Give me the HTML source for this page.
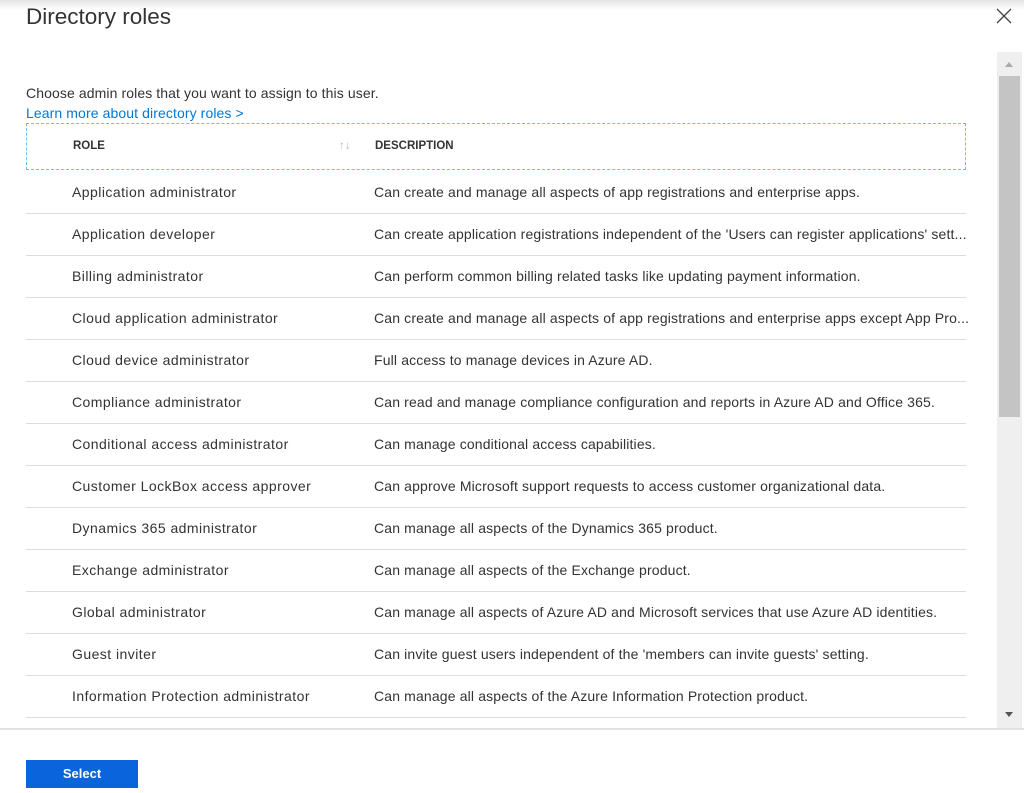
<!DOCTYPE html>
<html><head><style>
body{margin:0;width:1024px;height:793px;background:#fff;font-family:"Liberation Sans",sans-serif;color:#333;position:relative;overflow:hidden}
.top{position:absolute;left:0;top:0;width:1024px;height:10px;background:linear-gradient(#e4e4e4,#fff)}
h1{position:absolute;left:26px;top:4px;margin:0;font-size:22.5px;font-weight:normal;color:#333}
.x{position:absolute;left:995px;top:7px}
.intro{position:absolute;left:26px;top:85px;font-size:14px;letter-spacing:0.1px;color:#333}
.link{position:absolute;left:26px;top:105px;font-size:14px;letter-spacing:0.1px;color:#0078d7}
.hdr{position:absolute;left:26px;top:123px;width:940px;height:47px;border:1px dashed #6cc0f0;box-sizing:border-box}
.hdr span{position:absolute;top:16px;font-size:11.5px;font-weight:bold;color:#333}
.row{position:absolute;left:26px;width:940px;height:42px;border-bottom:1px solid #ddd;font-size:14px}
.row .r{position:absolute;left:46px;top:13px;color:#333;letter-spacing:0.45px}
.row .d{position:absolute;left:348px;top:13px;color:#333;white-space:nowrap;letter-spacing:0.15px}
.track{position:absolute;left:997px;top:52px;width:25px;height:676px;background:#efefef}
.thumb{position:absolute;left:999px;top:76px;width:21px;height:341px;background:#c4c4c4}
.bl{position:absolute;left:0;top:728px;width:1024px;height:2px;background:#e2e2e2}
.btn{position:absolute;left:26px;top:760px;width:112px;height:28px;background:#0a64dc;color:#fff;font-size:13px;font-weight:bold;text-align:center;line-height:28px}
</style></head><body>
<div class="top"></div>
<h1>Directory roles</h1>
<svg class="x" width="18" height="18" viewBox="0 0 18 18"><path d="M2 2L16 16M16 2L2 16" stroke="#444" stroke-width="1.3"/></svg>
<div class="intro">Choose admin roles that you want to assign to this user.</div>
<div class="link">Learn more about directory roles &gt;</div>
<div class="hdr"><span style="left:46px">ROLE</span><span style="left:312px;color:#bbb;font-weight:normal">↑↓</span><span style="left:348px">DESCRIPTION</span></div>
<div class="row" style="top:171px"><span class="r">Application administrator</span><span class="d">Can create and manage all aspects of app registrations and enterprise apps.</span></div>
<div class="row" style="top:213px"><span class="r">Application developer</span><span class="d">Can create application registrations independent of the 'Users can register applications' sett...</span></div>
<div class="row" style="top:255px"><span class="r">Billing administrator</span><span class="d">Can perform common billing related tasks like updating payment information.</span></div>
<div class="row" style="top:297px"><span class="r">Cloud application administrator</span><span class="d">Can create and manage all aspects of app registrations and enterprise apps except App Pro...</span></div>
<div class="row" style="top:339px"><span class="r">Cloud device administrator</span><span class="d">Full access to manage devices in Azure AD.</span></div>
<div class="row" style="top:381px"><span class="r">Compliance administrator</span><span class="d">Can read and manage compliance configuration and reports in Azure AD and Office 365.</span></div>
<div class="row" style="top:423px"><span class="r">Conditional access administrator</span><span class="d">Can manage conditional access capabilities.</span></div>
<div class="row" style="top:465px"><span class="r">Customer LockBox access approver</span><span class="d">Can approve Microsoft support requests to access customer organizational data.</span></div>
<div class="row" style="top:507px"><span class="r">Dynamics 365 administrator</span><span class="d">Can manage all aspects of the Dynamics 365 product.</span></div>
<div class="row" style="top:549px"><span class="r">Exchange administrator</span><span class="d">Can manage all aspects of the Exchange product.</span></div>
<div class="row" style="top:591px"><span class="r">Global administrator</span><span class="d">Can manage all aspects of Azure AD and Microsoft services that use Azure AD identities.</span></div>
<div class="row" style="top:633px"><span class="r">Guest inviter</span><span class="d">Can invite guest users independent of the 'members can invite guests' setting.</span></div>
<div class="row" style="top:675px"><span class="r">Information Protection administrator</span><span class="d">Can manage all aspects of the Azure Information Protection product.</span></div>
<div class="track"></div>
<div class="thumb"></div>
<svg style="position:absolute;left:1004px;top:60px" width="10" height="8"><path d="M1 7L5 2L9 7Z" fill="#aaa"/></svg>
<svg style="position:absolute;left:1004px;top:711px" width="10" height="8"><path d="M1 1L5 6L9 1Z" fill="#555"/></svg>
<div class="bl"></div>
<div class="btn">Select</div>
</body></html>
